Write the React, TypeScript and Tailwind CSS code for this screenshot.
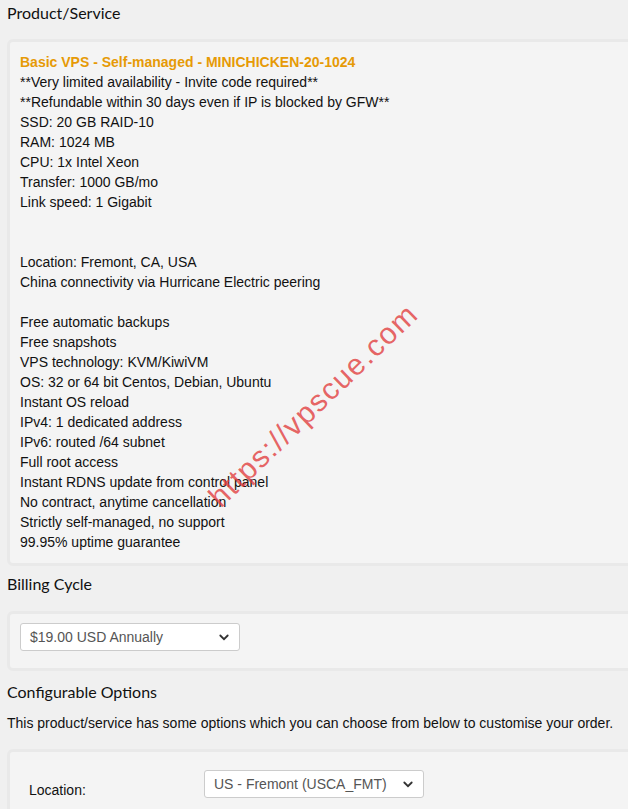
import React from 'react';

const features = [
  '**Very limited availability - Invite code required**',
  '**Refundable within 30 days even if IP is blocked by GFW**',
  'SSD: 20 GB RAID-10',
  'RAM: 1024 MB',
  'CPU: 1x Intel Xeon',
  'Transfer: 1000 GB/mo',
  'Link speed: 1 Gigabit',
  '',
  '',
  'Location: Fremont, CA, USA',
  'China connectivity via Hurricane Electric peering',
  '',
  'Free automatic backups',
  'Free snapshots',
  'VPS technology: KVM/KiwiVM',
  'OS: 32 or 64 bit Centos, Debian, Ubuntu',
  'Instant OS reload',
  'IPv4: 1 dedicated address',
  'IPv6: routed /64 subnet',
  'Full root access',
  'Instant RDNS update from control panel',
  'No contract, anytime cancellation',
  'Strictly self-managed, no support',
  '99.95% uptime guarantee',
];

function Chevron() {
  return (
    <svg width="10" height="7" viewBox="0 0 10 7" className="shrink-0">
      <path d="M1.3 1.5 L5 5.2 L8.7 1.5" fill="none" stroke="#333" strokeWidth="1.8" strokeLinecap="round" />
    </svg>
  );
}

function Select({ value, className }: { value: string; className?: string }) {
  return (
    <div
      className={`flex items-center justify-between h-[28px] w-[220px] bg-white border border-[#cccccc] rounded-[3px] pl-[9px] pr-[10px] text-[14px] text-[#555] ${className ?? ''}`}
    >
      <span>{value}</span>
      <Chevron />
    </div>
  );
}

function Card({ children, className }: { children: React.ReactNode; className?: string }) {
  return (
    <div
      className={`ml-[7px] -mr-[12px] border-[3px] border-[#e9e9e9] bg-[#f4f4f4] rounded-[6px] ${className ?? ''}`}
    >
      {children}
    </div>
  );
}

export default function App() {
  return (
    <div
      className="relative w-[628px] h-[809px] overflow-hidden bg-[#f0f0f0] text-[#111]"
      style={{ fontFamily: '"Liberation Sans", Arial, sans-serif' }}
    >
      <h2 className="pl-[7px] pt-[2px] h-[39px] text-[16px] leading-[22px] text-[#111] font-['Lato',sans-serif]">
        Product/Service
      </h2>

      <Card className="pt-[10px] pb-[11px] pl-[10px]">
        <div className="text-[14px] leading-[20px]">
          <div className="font-bold text-[#e69a06]">Basic VPS - Self-managed - MINICHICKEN-20-1024</div>
          {features.map((f, i) => (
            <div key={i} className="h-[20px]">
              {f}
            </div>
          ))}
        </div>
      </Card>

      <h2 className="pl-[7px] pt-[7px] h-[45px] text-[16px] leading-[22px] text-[#111] font-['Lato',sans-serif]">
        Billing Cycle
      </h2>

      <Card className="pt-[9px] pb-[17px] pl-[10px]">
        <Select value="$19.00 USD Annually" />
      </Card>

      <h2 className="pl-[7px] pt-[10px] h-[42px] text-[16px] leading-[22px] text-[#111] font-['Lato',sans-serif]">
        Configurable Options
      </h2>

      <p className="pl-[7px] h-[36px] text-[14px] leading-[20px] text-[#111]">
        This product/service has some options which you can choose from below to customise your order.
      </p>

      <Card className="pt-[18px] pb-[20px] pl-[19px]">
        <div className="flex items-start">
          <span className="w-[175px] pt-[10px] text-[14px] leading-[20px]">Location:</span>
          <Select value="US - Fremont (USCA_FMT)" />
        </div>
      </Card>

      {/* watermark */}
      <div className="pointer-events-none absolute left-[313px] top-[405px] -translate-x-1/2 -translate-y-1/2 -rotate-[44deg] whitespace-nowrap text-[30px] tracking-[1.5px] text-[rgba(226,62,62,0.8)]">
        https://vpscue.com
      </div>
    </div>
  );
}
